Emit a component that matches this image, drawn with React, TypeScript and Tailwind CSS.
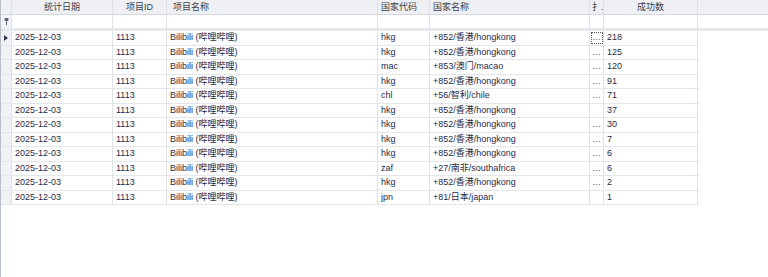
import { ReactNode } from "react";

type Row = {
  date: string;
  pid: string;
  name: string;
  code: string;
  country: string;
  more: boolean;
  count: string;
};

const rows: Row[] = [
  { date: "2025-12-03", pid: "1113", name: "Bilibili (哔哩哔哩)", code: "hkg", country: "+852/香港/hongkong", more: true, count: "218" },
  { date: "2025-12-03", pid: "1113", name: "Bilibili (哔哩哔哩)", code: "hkg", country: "+852/香港/hongkong", more: true, count: "125" },
  { date: "2025-12-03", pid: "1113", name: "Bilibili (哔哩哔哩)", code: "mac", country: "+853/澳门/macao", more: true, count: "120" },
  { date: "2025-12-03", pid: "1113", name: "Bilibili (哔哩哔哩)", code: "hkg", country: "+852/香港/hongkong", more: true, count: "91" },
  { date: "2025-12-03", pid: "1113", name: "Bilibili (哔哩哔哩)", code: "chl", country: "+56/智利/chile", more: true, count: "71" },
  { date: "2025-12-03", pid: "1113", name: "Bilibili (哔哩哔哩)", code: "hkg", country: "+852/香港/hongkong", more: false, count: "37" },
  { date: "2025-12-03", pid: "1113", name: "Bilibili (哔哩哔哩)", code: "hkg", country: "+852/香港/hongkong", more: true, count: "30" },
  { date: "2025-12-03", pid: "1113", name: "Bilibili (哔哩哔哩)", code: "hkg", country: "+852/香港/hongkong", more: true, count: "7" },
  { date: "2025-12-03", pid: "1113", name: "Bilibili (哔哩哔哩)", code: "hkg", country: "+852/香港/hongkong", more: true, count: "6" },
  { date: "2025-12-03", pid: "1113", name: "Bilibili (哔哩哔哩)", code: "zaf", country: "+27/南非/southafrica", more: true, count: "6" },
  { date: "2025-12-03", pid: "1113", name: "Bilibili (哔哩哔哩)", code: "hkg", country: "+852/香港/hongkong", more: true, count: "2" },
  { date: "2025-12-03", pid: "1113", name: "Bilibili (哔哩哔哩)", code: "jpn", country: "+81/日本/japan", more: false, count: "1" },
];

function Cell({ w, children, className = "" }: { w: string; children?: ReactNode; className?: string }) {
  return (
    <div className={`${w} shrink-0 border-r border-[#dfe2e8] overflow-hidden whitespace-nowrap flex items-center ${className}`}>
      {children}
    </div>
  );
}

function PinIcon() {
  return (
    <svg width="5" height="7" viewBox="0 0 5 7">
      <rect x="0.5" y="0" width="4" height="3" rx="1" fill="#5b6477" />
      <rect x="2" y="3" width="1" height="4" fill="#5b6477" />
    </svg>
  );
}

export default function App() {
  return (
    <div
      className="w-[768px] h-[277px] bg-white border-l border-[#b9bfca] text-[9px] leading-none text-[#1f2b47] overflow-hidden"
      style={{ fontFamily: '"Liberation Sans", "Noto Sans CJK SC", sans-serif' }}
    >
      {/* header */}
      <div className="flex h-[15px] bg-[#eef0f4] border-b border-[#d5d9e0] text-[#3a3f4a]">
        <Cell w="w-[11px]" />
        <Cell w="w-[101px]" className="justify-center">统计日期</Cell>
        <Cell w="w-[54px]" className="justify-center">项目ID</Cell>
        <Cell w="w-[211px]" className="pl-[6px]">项目名称</Cell>
        <Cell w="w-[52px]" className="pl-[3px]">国家代码</Cell>
        <Cell w="w-[160px]" className="pl-[3px]">国家名称</Cell>
        <Cell w="w-[14px]" className="pl-[2px]">扌.</Cell>
        <Cell w="w-[94px]" className="justify-center">成功数</Cell>
      </div>

      {/* filter row */}
      <div className="flex h-[16px] border-b-[3px] border-[#e4e7ec]">
        <Cell w="w-[11px]" className="justify-center bg-[#f3f4f7]">
          <PinIcon />
        </Cell>
        <Cell w="w-[101px]" />
        <Cell w="w-[54px]" />
        <Cell w="w-[211px]" />
        <Cell w="w-[52px]" />
        <Cell w="w-[160px]" />
        <Cell w="w-[14px]" />
        <Cell w="w-[94px]" />
      </div>

      {/* data rows */}
      {rows.map((r, i) => (
        <div key={i} className="flex w-[698px] h-[14.5px] border-b border-[#e3e6eb]">
          <Cell w="w-[11px]" className="justify-center bg-[#f0f2f5]">
            {i === 0 && (
              <svg width="4" height="6" viewBox="0 0 4 6">
                <path d="M0 0 L4 3 L0 6 Z" fill="#30384a" />
              </svg>
            )}
          </Cell>
          <Cell w="w-[101px]" className="pl-[3px]">{r.date}</Cell>
          <Cell w="w-[54px]" className="pl-[3px]">{r.pid}</Cell>
          <Cell w="w-[211px]" className="pl-[3px]">{r.name}</Cell>
          <Cell w="w-[52px]" className="pl-[3px]">{r.code}</Cell>
          <Cell w="w-[160px]" className="pl-[3px]">{r.country}</Cell>
          <Cell w="w-[14px]" className="justify-center">
            {r.more && (
              <span
                className={`flex items-center justify-center w-[12px] h-[12px] text-[#4a5366] ${
                  i === 0 ? "border border-dotted border-[#555]" : ""
                }`}
              >
                …
              </span>
            )}
          </Cell>
          <Cell w="w-[94px]" className="pl-[3px]">{r.count}</Cell>
        </div>
      ))}
    </div>
  );
}
